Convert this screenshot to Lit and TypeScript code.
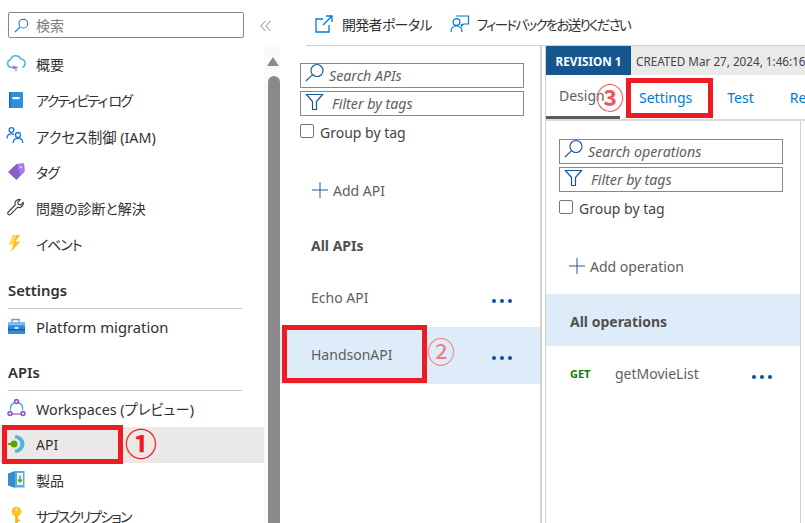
import { LitElement, html, css, svg } from "lit";
import { customElement } from "lit/decorators.js";

const searchIcon = html`<svg class="glass" width="20" height="20" viewBox="0 0 20 20" fill="none" stroke="#15569b" stroke-width="1.1">
  <circle cx="12" cy="7.5" r="6" /><path d="M7.6 11.6 1 18" />
</svg>`;

const filterIcon = html`<svg class="funnel" width="20" height="18" viewBox="0 0 20 18" fill="none" stroke="#15569b" stroke-width="1.2">
  <path d="M1.5 1.5h16l-6 7v8h-4v-8z" />
</svg>`;

const plusIcon = html`<svg width="16" height="16" viewBox="0 0 16 16" stroke="#2b579a" stroke-width="1"><path d="M8 0v16M0 8h16" /></svg>`;

const icons: Record<string, unknown> = {
  cloud: svg`<path d="M5 13.5a4 4 0 0 1-.5-7.8 5.5 5.5 0 0 1 10.3-.6 4.3 4.3 0 0 1 1.5 8.3" fill="#fff" stroke="#3cc0e0" stroke-width="1.5" /><path d="M4 13.2h7" stroke="#3cc0e0" stroke-width="1.2" /><path d="M8 13.5h4M10 13.5v4" stroke="#5ea0ef" stroke-width="1.2" /><circle cx="8" cy="13.4" r="1.7" fill="#a66ccf" />`,
  book: svg`<rect x="3" y="2" width="14" height="16" rx="1" fill="#2f8fdc" /><rect x="3" y="2" width="1.6" height="16" fill="#1b6bb5" /><rect x="6.5" y="7" width="7" height="2.2" fill="#fff" />`,
  people: svg`<g fill="none" stroke="#2272d4" stroke-width="1.3"><circle cx="5.5" cy="4" r="2.4" /><path d="M1 12.5c0-3 1.8-4.6 4.5-4.6 1 0 1.9.2 2.6.7" /><circle cx="12" cy="9" r="2.5" /><path d="M7.2 17c0-2.8 2-4.6 4.8-4.6s4.8 1.8 4.8 4.6" /></g>`,
  tag: svg`<path d="M2 10 10.5 2l7.5-.5.5 8L10.5 18z" fill="#8661c5" /><path d="M10.5 2l7.5-.5.5 8-4 4z" fill="#a67af4" /><circle cx="14.8" cy="5.2" r="1.1" fill="#e6d8fa" />`,
  wrench: svg`<path d="M11.2 2.1a4.4 4.4 0 0 1 3.2-.6l-2.6 2.6.6 2.3 2.3.6 2.6-2.6a4.4 4.4 0 0 1-5.8 4.9l-7 7a1.6 1.6 0 0 1-2.3-2.3l7-7a4.4 4.4 0 0 1 2-4.9z" fill="#fff" stroke="#444" stroke-width="1.2" stroke-linejoin="round" />`,
  bolt: svg`<path d="M7 1h7L9.5 7.5h5L5 18l2.3-7.7H3z" fill="#fcc419" /><path d="M7 1h3.5L6.8 10.3H3z" fill="#ffda5c" />`,
  box: svg`<path d="M6 5V2.5h7V5" fill="none" stroke="#7a98bd" stroke-width="1.4" /><rect x="2" y="5" width="17" height="12" fill="#2f8ddb" /><rect x="2" y="5" width="17" height="3.4" fill="#7fbce9" /><path d="M2 11.5c4 1.6 5 0 8.500 0s5 1.600 8.500 0v2H2z" fill="#0f5fa8" /><rect x="8.500" y="10" width="4" height="2" fill="#cfe8fa" />`,
  workspace: svg`<g fill="none" stroke="#3cb6dd" stroke-width="1.4"><path d="M4.500 12A7 7 0 0 1 8.500 4.500" /><path d="M16.500 12A7 7 0 0 0 12.500 4.500" /></g><path d="M6 16h9" stroke="#a56fd0" stroke-width="1.4" /><g fill="#fff" stroke="#8c5bc9" stroke-width="1.6"><circle cx="10.500" cy="3.500" r="1.9" /><circle cx="4" cy="15.500" r="1.9" /><circle cx="17" cy="15.500" r="1.9" /></g>`,
  api: svg`<path d="M9.500 1a9 9 0 0 1 0 18l-1-3.200a5.800 5.800 0 0 0 0-11.600z" fill="#50b4dd" /><path d="M2 9h5v2H2z" fill="#5ba300" /><circle cx="8" cy="10" r="3.500" fill="#5ba300" />`,
  product: svg`<path d="M2 3.500 9 1v17l-7-2.500z" fill="#2e8fca" /><path d="M9 1h9.500v16.500H9z" fill="#53b0e2" /><rect x="11" y="3" width="6" height="12" fill="#eef7fc" /><path d="M14 5.500v6M12 9.500l2 2.400 2-2.400" fill="none" stroke="#5ba300" stroke-width="1.4" />`,
  key: svg`<circle cx="10.500" cy="5.500" r="4.800" fill="#fcc419" /><rect x="9.200" y="9" width="2.600" height="9" fill="#f4b400" /><rect x="11.500" y="13.500" width="2.400" height="1.800" fill="#f4b400" /><circle cx="10.500" cy="3.600" r="1.100" fill="#fff3c4" />`,
};

const navIcon = (name: string) =>
  html`<svg class="nav-icon" width="20" height="20" viewBox="0 0 20 20">${icons[name]}</svg>`;

const moreDots = html`<span class="dots"><i></i><i></i><i></i></span>`;

@customElement("app-root")
export class AppRoot extends LitElement {
  static styles = css`
    :host {
      display: block;
      position: relative;
      width: 805px;
      height: 523px;
      overflow: hidden;
      background: #fff;
      color: #323130;
      font-family: "Noto Sans", "Noto Sans CJK JP", sans-serif;
      font-size: 14px;
      font-feature-settings: "palt";
    }

    .page {
      display: flex;
      height: 523px;
    }

    /* left blade menu */
    .side {
      width: 264px;
      flex: none;
      overflow: hidden;
    }

    .side-search {
      display: flex;
      align-items: center;
      gap: 7px;
      box-sizing: border-box;
      height: 26px;
      width: 236px;
      margin: 12px 0 9px 8px;
      padding-left: 5px;
      border: 1px solid #8a8886;
      border-radius: 2px;
      color: #7a7a7a;
    }

    .nav-row {
      display: flex;
      align-items: center;
      box-sizing: border-box;
      height: 36px;
      flex: none;
      padding: 0 0 2px 6px;
      white-space: nowrap;
    }

    .nav-row.latin {
      font-size: 14.8px;
    }

    .nav-row.mixed {
      font-size: 14.3px;
    }

    .nav-row.tight {
      letter-spacing: -1.1px;
    }

    .nav-row.tighter {
      letter-spacing: -1.8px;
    }

    .nav-row .nav-icon {
      width: 20px;
      height: 20px;
      margin-right: 10px;
      flex: none;
    }

    .nav-row.active {
      background: #ebe9e8;
    }

    .group {
      box-sizing: border-box;
      height: 34px;
      margin: 12px 22px 0 8px;
      padding-top: 5px;
      border-bottom: 1px solid #c8c6c4;
      font-size: 14.8px;
      font-weight: 600;
    }

    .group + .nav-row {
      margin-top: 1px;
    }

    .group.apis {
      margin-top: 11px;
    }

    .group.apis + .nav-row {
      margin-top: 0;
    }

    .scroll {
      width: 16px;
      flex: none;
      display: flex;
      flex-direction: column;
      align-items: flex-end;
      margin-top: 46px;
      background: #fafafa;
    }

    .scroll .up {
      width: 0;
      height: 0;
      margin: 11px 1px 0 0;
      border: 6px solid transparent;
      border-top: 0;
      border-bottom: 9px solid #8a8a8a;
    }

    .scroll .thumb {
      width: 12px;
      flex: 1;
      margin-top: 10px;
      border-radius: 6px 6px 0 0;
      background: #8a8a8a;
    }

    .collapse {
      position: absolute;
      left: 260px;
      top: 20px;
    }

    /* right side */
    .main {
      flex: 1;
      min-width: 0;
      display: flex;
      flex-direction: column;
    }

    .toolbar {
      display: flex;
      align-items: center;
      flex: none;
      box-sizing: border-box;
      height: 46px;
      margin-left: 26px;
      padding: 2px 0 0 9px;
      border-bottom: 1px solid #d2d0ce;
    }

    .tool {
      display: flex;
      align-items: center;
      gap: 9px;
      letter-spacing: -0.7px;
      white-space: nowrap;
    }

    .tool + .tool {
      margin-left: 18px;
      gap: 7px;
      font-size: 13.5px;
      letter-spacing: -1.7px;
    }

    .panes {
      flex: 1;
      display: flex;
      min-height: 0;
    }

    .api-pane {
      width: 260px;
      flex: none;
      border-right: 2px solid #d2d0ce;
      padding-top: 17px;
    }

    .field {
      display: flex;
      align-items: center;
      box-sizing: border-box;
      width: 224px;
      height: 25px;
      border: 1px solid #8a8886;
      font-style: italic;
      font-size: 14.2px;
      color: #605e5c;
      padding-left: 4px;
      gap: 4px;
    }

    .field + .field {
      margin-top: 3px;
    }

    .field .glass {
      margin-bottom: 5px;
    }

    .field .funnel {
      margin: 0 3px 3px 0;
    }

    .filters {
      margin-left: 20px;
    }

    .check {
      display: flex;
      align-items: center;
      gap: 6px;
      margin-top: 5px;
      height: 20px;
      color: #444;
    }

    .check span {
      padding-top: 2px;
    }

    .check i {
      display: block;
      box-sizing: border-box;
      width: 14px;
      height: 14px;
      border: 1px solid #767676;
      border-radius: 2px;
    }

    .add {
      display: flex;
      align-items: center;
      gap: 5px;
      color: #605e5c;
      height: 20px;
    }

    .api-pane .add {
      margin: 39px 0 0 32px;
    }

    .heading {
      font-weight: 700;
      color: #505050;
    }

    .api-pane .heading {
      margin: 36px 0 0 31px;
      height: 20px;
      line-height: 20px;
    }

    .api-row {
      display: flex;
      align-items: center;
      justify-content: space-between;
      box-sizing: border-box;
      height: 57px;
      padding: 0 28px 3px 31px;
      color: #605e5c;
    }

    .api-row.echo {
      margin-top: 14px;
    }

    .api-row.selected {
      background: #deecf9;
    }

    .dots {
      display: inline-flex;
      gap: 4px;
      margin-top: 8px;
    }

    .dots i {
      width: 4px;
      height: 4px;
      border-radius: 50%;
      background: #0f4fa3;
    }

    .gap {
      width: 3px;
      flex: none;
    }

    .revision {
      flex: 1;
      min-width: 0;
      border-left: 1px solid #d2d0ce;
      overflow: hidden;
    }

    .rev-head {
      display: flex;
      align-items: center;
      height: 29px;
      background: #eaeaea;
      white-space: nowrap;
      font-size: 11.7px;
      color: #444;
    }

    .rev-badge {
      display: flex;
      align-items: center;
      justify-content: center;
      flex: none;
      height: 100%;
      width: 85px;
      margin-right: 5px;
      background: #15568f;
      color: #fff;
      font-weight: 700;
    }

    .tabs {
      display: flex;
      box-sizing: border-box;
      height: 46px;
      border-bottom: 2px solid #dcdcdc;
      white-space: nowrap;
    }

    .tab {
      display: flex;
      align-items: center;
      flex: none;
      height: 100%;
      box-sizing: border-box;
      color: #0078d4;
    }

    .tab.current {
      width: 74px;
      padding-left: 13px;
      color: #605e5c;
      border-bottom: 3px solid #5a5a5a;
    }

    .tab.settings {
      margin-left: 19px;
    }

    .tab.test {
      margin-left: 35px;
    }

    .tab.rev {
      margin-left: 36px;
    }

    .ops {
      box-sizing: border-box;
      width: 255px;
      height: 402px;
      border-right: 1px solid #d2d0ce;
      padding-top: 18px;
    }

    .ops .filters {
      margin-left: 13px;
    }

    .ops .add {
      margin: 39px 0 0 23px;
    }

    .ops-all {
      display: flex;
      align-items: center;
      box-sizing: border-box;
      height: 52px;
      margin-top: 18px;
      padding: 2px 0 0 24px;
      background: #deecf9;
    }

    .op {
      display: flex;
      align-items: center;
      height: 54px;
      padding-left: 24px;
      color: #605e5c;
    }

    .verb {
      width: 45px;
      font-size: 11px;
      font-weight: 700;
      color: #107c10;
    }

    .op .dots {
      margin-left: 53px;
    }

    /* annotations drawn on top of the screenshot */
    .mark {
      position: absolute;
      box-sizing: border-box;
      border: 5px solid #ed1c24;
    }

    .mark.m1 {
      left: 2px;
      top: 425px;
      width: 121px;
      height: 39px;
    }

    .mark.m2 {
      left: 282px;
      top: 325px;
      width: 145px;
      height: 58px;
    }

    .mark.m3 {
      left: 626px;
      top: 78px;
      width: 87px;
      height: 40px;
    }

    .num {
      position: absolute;
      font-family: "Noto Sans CJK JP", sans-serif;
      font-feature-settings: normal;
      line-height: 1;
      color: #ed1c24;
    }

    .num.n1 {
      left: 125px;
      top: 426px;
      font-size: 32px;
      font-weight: 700;
    }

    .num.n2 {
      left: 427px;
      top: 337px;
      font-size: 28px;
      color: #ef7d82;
    }

    .num.n3 {
      left: 596px;
      top: 83px;
      font-size: 28px;
      font-weight: 700;
      color: #f0565c;
    }
  `;

  private renderFilters(placeholder: string) {
    return html`
      <div class="filters">
        <div class="field">${searchIcon}<span>${placeholder}</span></div>
        <div class="field">${filterIcon}<span>Filter by tags</span></div>
        <div class="check"><i></i><span>Group by tag</span></div>
      </div>
    `;
  }

  render() {
    return html`
      <div class="page">
        <nav class="side">
          <div class="side-search">
            <svg width="15" height="15" viewBox="0 0 16 16" fill="none" stroke="#0078d4" stroke-width="1.1">
              <circle cx="10" cy="6" r="4.7" /><path d="M6.6 9.4 1 15" />
            </svg>
            <span>検索</span>
          </div>
          <div class="nav-row">${navIcon("cloud")}概要</div>
          <div class="nav-row tighter">${navIcon("book")}アクティビティ ログ</div>
          <div class="nav-row mixed">${navIcon("people")}アクセス制御 (IAM)</div>
          <div class="nav-row tight">${navIcon("tag")}タグ</div>
          <div class="nav-row">${navIcon("wrench")}問題の診断と解決</div>
          <div class="nav-row tight">${navIcon("bolt")}イベント</div>
          <div class="group">Settings</div>
          <div class="nav-row latin">${navIcon("box")}Platform migration</div>
          <div class="group apis">APIs</div>
          <div class="nav-row mixed">${navIcon("workspace")}Workspaces (プレビュー)</div>
          <div class="nav-row active">${navIcon("api")}API</div>
          <div class="nav-row">${navIcon("product")}製品</div>
          <div class="nav-row tighter">${navIcon("key")}サブスクリプション</div>
        </nav>
        <div class="scroll">
          <div class="up"></div>
          <div class="thumb"></div>
        </div>
        <div class="main">
          <div class="toolbar">
            <div class="tool">
              <svg width="18" height="18" viewBox="0 0 18 18" fill="none" stroke="#0078d4" stroke-width="1.3">
                <path d="M8 4H1v13h13v-7M8 10l9-9M11 1h6v6" />
              </svg>
              開発者ポータル
            </div>
            <div class="tool">
              <svg width="20" height="20" viewBox="0 0 20 20" fill="none" stroke="#0078d4" stroke-width="1.2">
                <circle cx="6.5" cy="8" r="3.4" /><path d="M1 18c0-3.6 2.2-6 5.5-6s5.5 2.4 5.5 6" />
                <path d="M6 2h12.5v8h-5l-2 2v-2" />
              </svg>
              フィードバックをお送りください
            </div>
          </div>
          <div class="panes">
            <section class="api-pane">
              ${this.renderFilters("Search APIs")}
              <div class="add">${plusIcon}<span>Add API</span></div>
              <div class="heading">All APIs</div>
              <div class="api-row echo"><span>Echo API</span>${moreDots}</div>
              <div class="api-row selected"><span>HandsonAPI</span>${moreDots}</div>
            </section>
            <div class="gap"></div>
            <section class="revision">
              <div class="rev-head">
                <span class="rev-badge">REVISION 1</span>
                <span>CREATED Mar 27, 2024, 1:46:16</span>
              </div>
              <div class="tabs">
                <div class="tab current">Design</div>
                <div class="tab settings">Settings</div>
                <div class="tab test">Test</div>
                <div class="tab rev">Revisions</div>
              </div>
              <div class="ops">
                ${this.renderFilters("Search operations")}
                <div class="add">${plusIcon}<span>Add operation</span></div>
                <div class="ops-all heading">All operations</div>
                <div class="op">
                  <span class="verb">GET</span>
                  <span>getMovieList</span>
                  ${moreDots}
                </div>
              </div>
            </section>
          </div>
        </div>
      </div>

      <svg class="collapse" width="12" height="12" viewBox="0 0 12 12" fill="none" stroke="#8a8886" stroke-width="1">
        <path d="M5.5 1 .8 6l4.7 5M10.5 1 5.8 6l4.7 5" />
      </svg>
      <div class="mark m1"></div>
      <div class="mark m2"></div>
      <div class="mark m3"></div>
      <span class="num n1">①</span>
      <span class="num n2">②</span>
      <span class="num n3">③</span>
    `;
  }
}

declare global {
  interface HTMLElementTagNameMap {
    "app-root": AppRoot;
  }
}
